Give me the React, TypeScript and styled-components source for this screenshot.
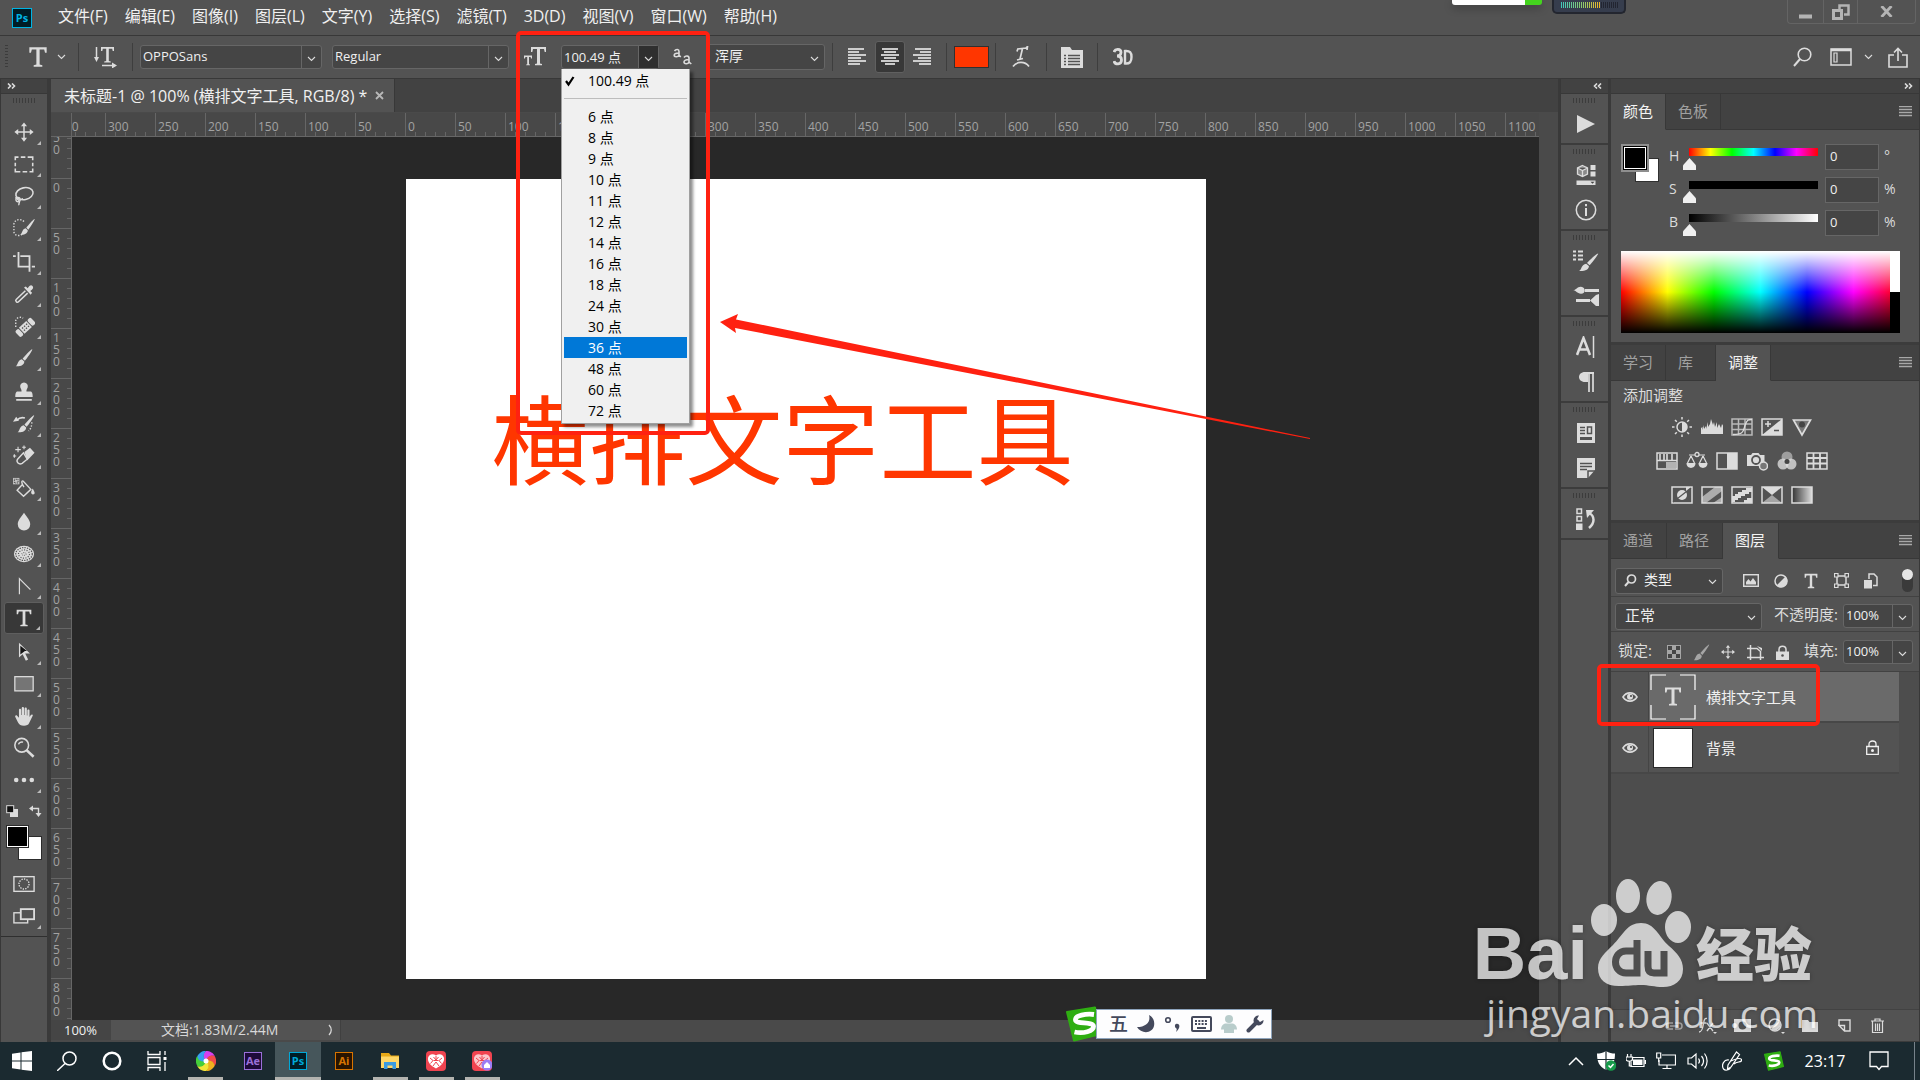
import React from 'react';
import styled, { createGlobalStyle, css } from 'styled-components';

const ui = `"Open Sans", "Noto Sans CJK SC", sans-serif`;

const c = {
  panel: '#535353',
  dark: '#424242',
  field: '#454545',
  line: '#383838',
  edge: '#666666',
  text: '#f0f0f0',
  dim: '#a0a0a0',
  icon: '#dcdcdc',
  red: '#ff2111',
  ink: '#ff3600',
};

const GlobalStyle = createGlobalStyle`
  * { box-sizing: border-box; }
  body { margin: 0; background: #282828; font-family: ${ui}; color: ${c.text}; overflow: hidden; }
  button, input, select { font-family: inherit; color: inherit; border: 0; padding: 0; margin: 0; background: none; outline: none; }
  svg { display: block; flex: none; }
`;

/* ---------- icons ---------- */

type IconProps = { w?: number; h?: number; box?: string; children: React.ReactNode };
const Icon = ({ w = 24, h = 24, box, children }: IconProps) => (
  <svg width={w} height={h} viewBox={box || `0 0 ${w} ${h}`} fill="none" stroke="currentColor" strokeWidth="1.5" aria-hidden="true">
    {children}
  </svg>
);
const F = { fill: 'currentColor', stroke: 'none' };

const Chevron = () => (
  <Icon w={9} h={6}><path d="M1 1l3.500 3.500L8 1" strokeWidth="1.100" /></Icon>
);
const TGlyph = <path d="M4 3h16v5h-1.500l-.8-3H13.500v14l2.500.6V21H8v-1.400l2.500-.6V5H6.300l-.8 3H4z" {...F} />;
const Brush = <g {...F}><path d="M21 2.500c1 .5-6.500 11-8 12.500l-2.500-2.300C12 11 19.500 2.500 21 2.500z" /><path d="M9.700 13.300l2.600 2.400c.3 3.500-4 5.800-9.300 5.300 2.500-1.500 2-7 6.700-7.700z" /></g>;
const MoveGlyph = <><path d="M12 4v16M4 12h16" strokeWidth="1.600" /><path d="M12 1.500l3.300 4.200H8.700zM12 22.500l3.300-4.200H8.700zM1.500 12l4.200-3.300v6.600zM22.500 12l-4.200-3.300v6.600z" {...F} /></>;

const tools: { name: string; art: React.ReactNode; plain?: boolean }[][] = [
  [
    { name: '移动工具', art: MoveGlyph },
    { name: '矩形选框工具', art: <path d="M2.500 8V4.500H6M8.500 4.500h5M16 4.500h5.500V8M21.500 10.500v4M21.500 17v3.500H18M15.500 20.500h-5M8 20.500H2.500V17M2.500 14.500v-4" strokeWidth="1.700" /> },
    { name: '套索工具', art: <><ellipse cx="12.500" cy="9.500" rx="9.500" ry="6.500" transform="rotate(-12 12.500 9.500)" strokeWidth="1.700" /><circle cx="5.500" cy="16" r="2.300" /><path d="M3 13c1 3 5 3.500 4 6-.5 1-1 1.500-.5 3M8 16l3-1" /></> },
    { name: '快速选择工具', art: <><path d="M12 5C8 1 1 3 1 8v8c0 4.500 7 5.500 9 2.500" strokeDasharray="1.500 1.700" /><g transform="translate(5.500 0) scale(.86 .92)">{Brush}</g></> },
  ],
  [
    { name: '裁剪工具', art: <path d="M6 1v16h11M0 5.500h3M8 5.500h10v17M20.500 17H24" strokeWidth="2" /> },
    { name: '吸管工具', art: <><path d="M13.500 8.500l-10 9.500c-1.500 1.500 1 4 2.500 2.500l10-9.500" strokeWidth="1.700" /><path d="M12 5l2-1.300 2 2c2-3 3.500-4 5.300-2.500 1.500 2 .5 3.500-2.500 5.500l2 2-1.500 2z" {...F} /></> },
    { name: '污点修复画笔工具', art: <><path d="M3 13V6c1-3.500 5.500-4.500 8-2.500" strokeDasharray="1.500 1.700" /><g transform="rotate(-43 13.500 13.500)"><rect x="2" y="9" width="5" height="9" rx="2" {...F} /><rect x="8" y="9" width="11" height="9" {...F} /><rect x="20" y="9" width="5" height="9" rx="2" {...F} /><path d="M10 12h1.500M13 12h1.500M16 12h1.500M10 15h1.500M13 15h1.500M16 15h1.500" stroke="#535353" /></g></> },
    { name: '画笔工具', art: Brush },
  ],
  [
    { name: '仿制图章工具', art: <path d="M12 1.500a4.200 4.200 0 014 5.500c-1 2-1.500 3-1.300 4.500h4.300c1.500 0 2.500 1.500 2.500 6h-19c0-4.500 1-6 2.500-6h4.300c.2-1.500-.3-2.500-1.300-4.500a4.200 4.200 0 014-5.500zM3.500 19.500h17V21.500h-17z" {...F} /> },
    { name: '历史记录画笔工具', art: <><g transform="translate(2 0)">{Brush}</g><path d="M4 8c3-3 6-3.500 9-2.500" strokeWidth="1.700" /><path d="M0 9.500L3.500 4l3 4.500z" {...F} /><path d="M20.500 10c0 4-1 7.500-3.500 9.500" strokeDasharray="1.500 1.800" /></> },
    { name: '魔术橡皮擦工具', art: <><path d="M12.500 7.500l6-4.500 5 5.500-8 8.500zM11.500 8.500l4 6" {...F} /><path d="M11.500 8.500L5 15.500c-2 3 1.500 6.500 5 4.500l5.500-4.500z" /><path d="M5.500 2v6M2.500 5h6M12 .5v4M10 2.500h4M1.500 10v4M-.5 12h4" strokeWidth="1.200" /></> },
    { name: '油漆桶工具', art: <><path d="M0 1h7v7H0z" {...F} opacity=".8" /><path d="M1.500 2.500h4v4h-4z" stroke="#333" strokeWidth="1" strokeDasharray="1 1" /><path d="M10.500 8L4.500 14.500l7 6.500 8-7.500-8.500-9C9 3.500 9 7 12 11" /><path d="M21.500 12.500c2.500 4 3 6.500.3 6.500s-2.500-3-.3-6.500z" {...F} /></> },
  ],
  [
    { name: '模糊工具', art: <path d="M12 2c3.500 5 6.800 8.500 6.800 12.500a6.800 6.800 0 01-13.600 0C5.200 10.500 8.500 7 12 2z" {...F} /> },
    { name: '海绵工具', art: <><ellipse cx="12" cy="12" rx="11" ry="9" {...F} /><ellipse cx="12" cy="12" rx="9" ry="7" stroke="#535353" strokeWidth="1.300" strokeDasharray="1.500 1.200" /><ellipse cx="12" cy="12" rx="6" ry="4.500" stroke="#535353" strokeWidth="1.300" strokeDasharray="1.200 1.500" /><ellipse cx="12" cy="12" rx="2.500" ry="1.500" stroke="#535353" strokeWidth="1" strokeDasharray="1 1" /></> },
    { name: '钢笔工具', art: <path d="M7 21V4l12 12" strokeWidth="1.300" /> },
    { name: '横排文字工具', art: TGlyph },
  ],
  [
    { name: '路径选择工具', art: <><path d="M6.500 2v16l4-3.500L14 21.500l2.500-1.300L13.300 13.500h5.200z" {...F} /><path d="M8 5.300v9.500l5-3.800h2.300z" fill="#151515" stroke="none" /></> },
    { name: '矩形工具', art: <rect x="2" y="4" width="20" height="15.500" fill="#757575" strokeWidth="1.400" /> },
    { name: '抓手工具', art: <path d="M6.500 14V5.500c0-1.700 2.300-1.700 2.400 0V11h.6V3.500c0-1.700 2.500-1.700 2.500 0V11h.6V4c0-1.700 2.500-1.700 2.500 0v7.500h.6V6c0-1.600 2.300-1.600 2.300 0v7l1.500-2c1-1.300 2.600-.4 2 .8l-4 8.200c-1 2-2.500 2.500-5.500 2.500-3.500 0-5-1-6.500-3.500l-3-6c-.7-1.500 1-2.500 2-1.300z" {...F} /> },
    { name: '缩放工具', art: <><circle cx="9.500" cy="9" r="7.500" strokeWidth="1.700" /><path d="M6 8c.5-2 3-3 5-2.300" /><path d="M14.500 14l8 7.500" strokeWidth="2.800" /></>, plain: true },
    { name: '更多工具', art: <g {...F}><circle cx="3.500" cy="12" r="2.500" /><circle cx="12" cy="12" r="2.500" /><circle cx="20.500" cy="12" r="2.500" /></g> },
  ],
];

/* ---------- shell ---------- */

const Shell = styled.div`
  position: relative; display: flex; flex-direction: column; width: 100%; height: 100vh;
  background: ${c.panel}; overflow: hidden;
`;

const MenuBar = styled.header`
  display: flex; align-items: center; height: 35px; padding-left: 12px; flex: none;
`;
const Menus = styled.nav`display: flex; gap: 17px; margin-left: 26px; padding-bottom: 3px; flex: 1;`;
const MenuItem = styled.button`font-size: 16px; line-height: 20px; white-space: nowrap;`;

const Logo = styled.span<{ $c: string; $bg: string; $s: number }>`
  display: grid; place-items: center; width: ${p => p.$s}px; height: ${p => p.$s}px;
  border: 1px solid ${p => p.$c}; background: ${p => p.$bg}; color: ${p => p.$c};
  font-size: 11px; line-height: 12px; font-weight: 700;
`;

const WindowButtons = styled.div`
  display: flex; align-self: flex-start; margin-right: 4px; height: 24px; border: 1px solid #646464; border-top: 0; border-radius: 0 0 4px 4px; color: #b4b4b4;
`;
const WinBtn = styled.button<{ $w: number }>`
  display: grid; place-items: center; width: ${p => p.$w}px; color: #b4b4b4;
  & + & { border-left: 1px solid #646464; }
`;

const OptionsBar = styled.div`
  display: flex; align-items: center; height: 43px; flex: none; border-top: 1px solid ${c.line}; padding-right: 12px; color: ${c.icon};
`;
const Grip = styled.i<{ $v?: boolean }>`
  display: block; flex: none;
  ${p => p.$v
    ? css`width: 3px; height: 24px; background: repeating-linear-gradient(#3c3c3c 0 1px, transparent 1px 3px);`
    : css`width: 23px; height: 5px; background: repeating-linear-gradient(90deg, #3c3c3c 0 1px, transparent 1px 3px);`}
`;
const Sep = styled.i`width: 1px; height: 28px; background: #3e3e3e; flex: none;`;
const Cell = styled.div<{ $w: number; $gap?: number }>`display: flex; align-items: center; justify-content: center; gap: ${p => p.$gap || 12}px; width: ${p => p.$w}px; flex: none;`;
const IconBtn = styled.button<{ $on?: boolean; $w?: number; $h?: number }>`
  display: grid; place-items: center; width: ${p => p.$w || 30}px; height: ${p => p.$h || 32}px; color: ${c.icon}; border-radius: 3px;
  ${p => p.$on && css`background: #383838; border: 1px solid #606060;`}
`;

const Field = styled.label<{ $w: number; $h?: number }>`
  display: flex; align-items: center; width: ${p => p.$w}px; height: ${p => p.$h || 24}px; flex: none;
  background: ${c.field}; border: 1px solid ${c.edge}; border-radius: 3px; color: ${c.icon};
`;
const FieldSelect = styled.select<{ $pad?: number; $size?: number }>`
  appearance: none; flex: 1; min-width: 0; height: 100%; padding: 0 0 2px ${p => p.$pad ?? 2}px;
  font-size: ${p => p.$size || 13}px; line-height: 20px; color: ${c.text};
  option { color: #000; }
`;
const FieldInput = styled.input`
  flex: 1; min-width: 0; width: 0; height: 100%; padding: 0 0 2px 2px; font-size: 13px; line-height: 20px; color: ${c.text};
`;
const Drop = styled.span<{ $div?: boolean; $dark?: boolean }>`
  display: grid; place-items: center; width: 20px; height: 100%; padding-top: 3px;
  ${p => p.$div && css`border-left: 1px solid ${c.edge};`}
  ${p => p.$dark && css`background: #2f2f2f;`}
`;
const SizeBox = styled.div`position: relative; flex: none;`;
const SizeMenu = styled.div`
  position: absolute; z-index: 5; top: 100%; left: 0; width: 129px; padding: 1px 2px 2px;
  background: #f0f0f0; border: 1px solid #a0a0a0; border-top: 0; box-shadow: 3px 3px 3px rgba(0, 0, 0, 0.45);
  display: flex; flex-direction: column;
`;
const SizeRow = styled.button<{ $hot?: boolean }>`
  display: grid; grid-template-columns: 24px 1fr; align-items: center; height: 21px; text-align: left;
  font-size: 14px; line-height: 21px; white-space: nowrap; color: ${p => (p.$hot ? '#fff' : '#000')}; background: ${p => (p.$hot ? '#0078d7' : 'none')};
`;
const SizeRule = styled.i`height: 1px; margin: 7px 0; background: #bdbdbd;`;
const Swatch = styled.button`width: 35px; height: 22px; background: ${c.ink}; border: 1px solid #303030;`;

/* ---------- work area ---------- */

const Main = styled.main`
  flex: 1; min-height: 0; display: grid; grid-template: minmax(0, 1fr) / 51px minmax(0, 1fr) 51px 309px; border-top: 1px solid ${c.line};
`;
const Strip = styled.div<{ $end?: boolean }>`
  display: flex; align-items: center; justify-content: ${p => (p.$end ? 'flex-end' : 'flex-start')};
  height: 15px; padding: 0 6px; background: ${c.dark}; border-bottom: 1px solid ${c.line}; flex: none; color: ${c.icon};
`;
const ToolColumn = styled.aside`display: flex; flex-direction: column; border-right: 4px solid #3a3a3a; border-left: 1px solid ${c.line}; min-height: 0;`;
const ToolList = styled.div`display: flex; flex-direction: column; align-items: center; gap: 2px; padding-top: 4px; border-bottom: 1px solid #2f2f2f; padding-bottom: 4px;`;
const GripHead = styled.div`height: 16px;`;
const ToolGroup = styled.div`display: flex; flex-direction: column;`;
const ToolButton = styled.button<{ $on?: boolean; $plain?: boolean }>`
  position: relative; display: grid; place-items: center; width: 40px; height: 32px; color: ${c.icon}; border-radius: 3px;
  ${p => p.$on && css`background: #383838; border: 1px solid #5e5e5e;`}
  ${p => !p.$plain && css`&::after { content: ''; position: absolute; right: 3px; bottom: 3px; border: 2px solid transparent; border-right-color: #bbb; border-bottom-color: #bbb; }`}
`;
const ColorPair = styled.div`position: relative; width: 36px; height: 35px; margin: 3px 0 6px; flex: none;`;
const Chip = styled.button<{ $bg: string; $front?: boolean; $s: number }>`
  position: absolute; ${p => (p.$front ? 'left:0; top:0; z-index:1;' : 'right:0; bottom:0;')}
  width: ${p => p.$s}px; height: ${p => p.$s}px; background: ${p => p.$bg}; border: 1px solid #2c2c2c;
  ${p => p.$front && css`box-shadow: inset 0 0 0 1px #fff;`}
`;
const Between = styled.div`display: flex; justify-content: space-between; width: 36px; height: 18px; margin: 4px 0 0; align-items: center; color: ${c.icon};`;

const Doc = styled.section`display: grid; grid-template-rows: 34px minmax(0, 1fr) 22px; min-width: 0; background: #4a4a4a; border-right: 2px solid #393939;`;
const TabBar = styled.div`display: flex; background: ${c.dark}; border-bottom: 1px solid #4a4a4a;`;
const DocTab = styled.div`
  display: flex; align-items: center; justify-content: space-between; gap: 8px; padding: 0 10px 0 13px; background: ${c.panel}; border-right: 1px solid ${c.line};
  font-size: 16px; line-height: 20px; white-space: nowrap;
`;
const Stage = styled.div`display: grid; grid-template: 24px minmax(0, 1fr) / 21px minmax(0, 1fr) 19px; min-height: 0;`;
const Corner = styled.div`background: #484848; border-bottom: 1px solid ${c.edge}; border-right: 1px solid ${c.edge};`;
const RulerX = styled.div`overflow: hidden; background: #484848; border-bottom: 1px solid ${c.edge};`;
const RulerXRow = styled.div`display: flex; height: 100%; margin-left: -17px;`;
const TickX = styled.span`
  flex: none; width: 50px; border-left: 1px solid ${c.edge}; padding: 5px 0 0 2px; font-size: 12px; line-height: 17px; color: #a2a2a2;
  background: repeating-linear-gradient(90deg, transparent 0 9px, ${c.edge} 9px 10px) 0 100% / 100% 4px no-repeat;
`;
const RulerY = styled.div`overflow: hidden; background: #484848; border-right: 1px solid ${c.edge};`;
const RulerYCol = styled.div`display: flex; flex-direction: column; margin-top: -9px;`;
const TickY = styled.span`
  flex: none; display: flex; flex-direction: column; height: 50px; border-top: 1px solid ${c.edge}; padding: 3px 0 0 2px; font-size: 12px; line-height: 12px; color: #a2a2a2;
  background: repeating-linear-gradient(transparent 0 9px, ${c.edge} 9px 10px) 100% 0 / 4px 100% no-repeat;
`;
const Viewport = styled.div`display: grid; place-items: center; grid-column: 2; background: #282828; overflow: hidden;`;
const Artboard = styled.div`
  width: 800px; height: 800px; background: #fff; padding: 200px 0 0 86px;
  font-family: "Noto Sans CJK SC", sans-serif; font-size: 97px; line-height: 112px; font-weight: 400; color: ${c.ink}; white-space: nowrap;
`;
const Status = styled.footer`display: flex; align-items: center; padding-bottom: 2px; font-size: 13px; line-height: 18px; color: ${c.text};`;
const ZoomInput = styled.input`width: 60px; height: 20px; padding-left: 13px; background: ${c.field}; font-size: 13px;`;
const DocInfo = styled.div`display: flex; align-items: center; justify-content: space-between; width: 230px; height: 20px; padding: 0 6px 0 50px; background: ${c.panel}; border-right: 1px solid #404040; font-size: 14px; color: #d8d8d8;`;

/* ---------- dock and panels ---------- */

const Dock = styled.aside`display: flex; flex-direction: column; border-left: 1px solid ${c.line}; border-right: 3px solid #3a3a3a;`;
const DockGroup = styled.div`display: flex; flex-direction: column; align-items: center; padding: 4px 0 2px; border-bottom: 2px solid #3c3c3c; ${Grip} { margin-bottom: 3px; }`;
const DockBtn = styled.button`display: grid; place-items: center; width: 44px; height: 35px; padding-left: 2px; color: ${c.icon};`;

const Panels = styled.aside`display: flex; flex-direction: column; min-height: 0; border-right: 1px solid ${c.line};`;
const Panel = styled.section<{ $grow?: boolean }>`
  display: flex; flex-direction: column; border-bottom: 3px solid #3c3c3c; ${p => p.$grow && css`flex: 1; min-height: 0; border-bottom-width: 1px;`}
`;
const Tabs = styled.div`display: flex; height: 36px; background: ${c.dark}; flex: none;`;
const Tab = styled.button<{ $on?: boolean; $w: number }>`
  min-width: ${p => p.$w}px; padding: 0 12px 2px; text-align: left; font-size: 15px; line-height: 20px; white-space: nowrap;
  color: ${p => (p.$on ? '#f4f4f4' : '#a0a0a0')}; background: ${p => (p.$on ? c.panel : 'none')};
  border-right: 1px solid ${c.line}; border-bottom: 1px solid ${p => (p.$on ? c.panel : c.line)};
`;
const TabRest = styled.div`display: flex; align-items: center; justify-content: flex-end; flex: 1; padding-right: 7px; border-bottom: 1px solid ${c.line}; color: #a8a8a8;`;
const ColorBody = styled.div`display: grid; grid-template-columns: 48px 1fr; padding: 14px 19px 9px 10px; row-gap: 15px;`;
const FgBg = styled.div`position: relative; width: 38px; height: 38px; &::before { content: ''; position: absolute; width: 28px; height: 28px; background: #8e8e8e; z-index: 1; }`;
const Fg = styled.button`position: absolute; left: 2px; top: 2px; z-index: 2; width: 24px; height: 24px; background: #000; border: 1px solid #000; box-shadow: inset 0 0 0 1px #fff;`;
const Bg = styled.button`position: absolute; right: 0; bottom: 0; width: 24px; height: 24px; background: #fff; border: 1px solid #303030;`;
const Sliders = styled.div`display: flex; flex-direction: column; gap: 7px;`;
const SliderRow = styled.div`display: grid; grid-template-columns: 13px 141px 54px 1fr; column-gap: 1px; height: 26px; font-size: 14px; line-height: 24px; color: ${c.icon};`;
const Slider = styled.input<{ $g: string }>`
  appearance: none; width: 141px; height: 22px; margin-top: 4px;
  background: linear-gradient(90deg, ${p => p.$g}) 6px 0 / 129px 8px no-repeat;
  &::-webkit-slider-runnable-track { height: 22px; }
  &::-webkit-slider-thumb { appearance: none; width: 13px; height: 12px; margin-top: 10px; background: #f0f0f0; clip-path: polygon(50% 0, 100% 60%, 100% 100%, 0 100%, 0 60%); }
`;
const NumInput = styled.input`width: 54px; height: 26px; padding: 0 0 2px 4px; background: ${c.field}; border: 1px solid ${c.edge}; font-size: 13px; color: ${c.text};`;
const Unit = styled.span`padding-left: 4px;`;
const Spectrum = styled.div`
  grid-column: 1 / 3; display: grid; grid-template-columns: 1fr 10px; height: 82px;
  background: linear-gradient(#fff, rgba(255,255,255,0) 50%, rgba(0,0,0,0) 50%, #000), linear-gradient(90deg, #f00, #ff0, #0f0, #0ff, #00f, #f0f, #f00);
  &::after { content: ''; grid-column: 2; background: linear-gradient(#fff 50%, #000 50%); }
`;
const AdjBody = styled.div`padding: 4px 12px 8px; font-size: 15px; line-height: 20px; color: #dcdcdc;`;
const AdjRow = styled.div<{ $in?: boolean }>`display: flex; height: 34px; padding-left: ${p => (p.$in ? 44 : 29)}px; &:first-of-type { margin-top: 5px; }`;

const Row = styled.div<{ $h: number; $top?: number }>`
  display: flex; align-items: center; height: ${p => p.$h}px; padding: ${p => p.$top || 0}px 6px 0 4px; border-bottom: 1px solid #424242; flex: none; color: ${c.icon};
`;
const Caption = styled.span`font-size: 15px; line-height: 20px; white-space: nowrap; color: ${c.icon}; padding-bottom: 5px;`;
const Push = styled.span`flex: 1;`;
const Toggle = styled.button`width: 11px; height: 23px; margin-left: 8px; border-radius: 6px; background: #3a3a3a; display: flex; &::after { content: ''; width: 11px; height: 11px; border-radius: 50%; background: #e6e6e6; }`;
const LayerList = styled.div`flex: 1; min-height: 0; background: #4d4d4d; padding-right: 20px;`;
const Layer = styled.div<{ $on?: boolean }>`
  display: grid; grid-template-columns: 37px 58px 1fr 33px; align-items: center; height: 51px; border-bottom: 2px solid #474747; background: ${p => (p.$on ? '#6a6a6a' : c.panel)};
  font-size: 15px; line-height: 20px; color: ${c.text};
`;
const Eye = styled.button`display: grid; place-items: center; width: 38px; height: 49px; background: ${c.panel}; border-right: 1px solid #454545; color: ${c.icon};`;
const Thumb = styled.span`display: block; width: 40px; height: 40px; margin-left: 5px; background: #fff; border: 1px solid #282828;`;
const TextThumb = styled.span`margin-left: 2px; color: ${c.icon};`;
const PanelFoot = styled.div`display: flex; align-items: center; justify-content: flex-end; gap: 10px; height: 32px; padding-right: 31px; border-top: 1px solid #424242; color: #d2d2d2; flex: none;`;

/* ---------- taskbar ---------- */

const Taskbar = styled.footer`display: flex; height: 38px; flex: none; background: #1b2a30; color: #fff; padding-right: 5px;`;
const Task = styled.button<{ $w?: number; $run?: boolean; $on?: boolean }>`
  position: relative; display: grid; place-items: center; width: ${p => p.$w || 46}px; height: 38px; color: #fff;
  ${p => p.$run && css`background: linear-gradient(#b4b4b0, #b4b4b0) 50% 100% / 35px 3px no-repeat;`}
  ${p => p.$on && css`background: linear-gradient(#b4b4b0, #b4b4b0) 50% 100% / 100% 3px no-repeat, #46565b;`}
`;
const Tray = styled.div`display: flex; align-items: center; margin-left: auto; padding-right: 13px; border-right: 1px solid #77828a;`;
const Clock = styled.time`width: 72px; padding-right: 16px; text-align: center; font-size: 16px; line-height: 20px;`;

/* ---------- overlays ---------- */

const Annotations = styled.svg`position: absolute; left: 0; top: 0; z-index: 8; pointer-events: none;`;
const Ime = styled.div`
  position: absolute; z-index: 9; left: 1066px; bottom: 40px; display: flex; align-items: center; height: 32px; color: #44495c;
`;
const ImeBar = styled.div`display: flex; align-items: center; justify-content: space-between; width: 176px; height: 30px; margin-left: -6px; padding: 0 7px 0 12px; background: #fdfdfe; border: 1px solid #8ea4bc; font-size: 19px; line-height: 24px; font-weight: 500;`;
const TopWidget = styled.div`
  position: absolute; z-index: 9; right: 294px; top: 0; display: flex; align-items: flex-start; gap: 10px;
`;
const WhiteStub = styled.i`width: 90px; height: 5px; background: linear-gradient(90deg, #fff 73px, #44d41e 73px); border-radius: 0 0 3px 3px; box-shadow: 0 3px 8px rgba(0,0,0,.3);`;
const Meter = styled.i`
  width: 74px; height: 14px; border: 2px solid #23262f; border-top: 0; border-radius: 0 0 5px 5px; background: #363d4d;
  &::before { content: ''; display: block; width: 58px; height: 6px; margin: 2px 0 0 7px; background: repeating-linear-gradient(90deg, transparent 0 1px, #363d4d 1px 2px), linear-gradient(90deg, #3fc9bd, #8fca6a 22px, #f0b428 39px, #222531 39px); }
`;
const Watermark = styled.div`position: absolute; z-index: 9; right: 102px; bottom: 43px; color: #fff; opacity: 0.72; pointer-events: none; text-shadow: 0 0 4px rgba(0,0,0,.35);`;
const MarkTop = styled.div`display: flex; align-items: flex-end; justify-content: flex-end; height: 112px; margin-right: 6px;`;
const MarkLatin = styled.span`font: 700 74px/70px "Liberation Sans", Arial, sans-serif; margin-right: 3px;`;
const MarkCjk = styled.span`font: 900 58px/76px "Noto Sans CJK SC", sans-serif; margin-left: 5px;`;
const MarkUrl = styled.div`font-size: 39px; line-height: 48px; font-weight: 500; text-align: right;`;

const lines = (a: number[][]) => a.map(([x1, x2, y]) => <path key={y} d={`M${x1} ${y + 1}H${x2}`} strokeWidth="1.800" />);
const sizes = [6, 8, 9, 10, 11, 12, 14, 16, 18, 24, 30, 36, 48, 60, 72];
const xs = Array.from({ length: 30 }, (_, i) => Math.abs(i * 50 - 350));
const ys = Array.from({ length: 18 }, (_, i) => Math.abs(i * 50 - 50));

const DblArrow = ({ back }: { back?: boolean }) => (
  <Icon w={9} h={6}><path d={back ? 'M4 .5L1.500 3 4 5.500M8 .5L5.500 3 8 5.500' : 'M1 .5L3.500 3 1 5.500M5 .5L7.500 3 5 5.500'} strokeWidth="1.600" /></Icon>
);
const Burger = () => <Icon w={13} h={11}><path d="M0 .5h13M0 3.500h13M0 6.500h13M0 9.500h13" strokeWidth="1.300" /></Icon>;
const PanelTabs = ({ items, on, w = 50 }: { items: string[]; on: number; w?: number }) => (
  <Tabs>
    {items.map((t, i) => <Tab key={t} $w={w} $on={i === on}>{t}</Tab>)}
    <TabRest><Burger /></TabRest>
  </Tabs>
);
const A = ({ children }: { children: React.ReactNode }) => (
  <IconBtn $w={30} $h={34}><Icon w={22} h={20}>{children}</Icon></IconBtn>
);
const frame = <rect x="1" y="2" width="20" height="16" />;
const EyeIcon = () => (
  <Icon w={16} h={12}><path d="M1 6c3.500-5.500 10.500-5.500 14 0-3.500 5.500-10.500 5.500-14 0z" strokeWidth="1.600" /><circle cx="8" cy="5.800" r="3" {...F} /><circle cx="9" cy="5" r="1" fill="#444" stroke="none" /></Icon>
);
const SogouS = ({ s }: { s: number }) => (
  <Icon w={s} h={s} box="0 0 36 36">
    <path d="M1 6L29 1.500 35 28 8 34.500z" fill="#2fae12" stroke="#2fae12" strokeWidth="2" strokeLinejoin="round" />
    <path d="M28 8.500C20 7.500 9 9.500 9.500 14c.5 4.500 18 1 18 6.500 0 4.500-10 7.500-19 5.500" stroke="#fff" strokeWidth="4.800" />
  </Icon>
);
const Heart = ({ house }: { house?: boolean }) => (
  <Icon w={20} h={20}>
    <rect width="20" height="20" rx="4" fill="#f04450" stroke="none" />
    <path d="M10 17.500C4.500 14.500 1.500 11 2 7c.7-4 5-5 8-2.500C13 2 17.300 3 18 7c.5 4-2.500 7.500-8 10.500z" fill="#fff" opacity={house ? 0.7 : 1} stroke="none" />
    <path d="M4 7l3 2.500-2.500 3M10 5v3M7.500 6l2.500 3 2.500-3M16 7l-3 2.500 2.500 3M7 15l3-4 3 4M7.500 9.500h5" stroke="#f04450" strokeWidth="1" />
    {house && <><circle cx="15" cy="14" r="5.500" fill="#9b7cf5" stroke="none" /><path d="M12 14l3-3 3 3v3h-6z" fill="#fff" stroke="none" /></>}
  </Icon>
);

export default function App() {
  return (
    <Shell>
      <GlobalStyle />
      <MenuBar>
        <Logo $c="#00b4e4" $bg="#001d26" $s={20}>Ps</Logo>
        <Menus>
          {['文件(F)', '编辑(E)', '图像(I)', '图层(L)', '文字(Y)', '选择(S)', '滤镜(T)', '3D(D)', '视图(V)', '窗口(W)', '帮助(H)'].map(m => <MenuItem key={m}>{m}</MenuItem>)}
        </Menus>
        <WindowButtons>
          <WinBtn $w={35} aria-label="最小化"><Icon w={13} h={14}><path d="M0 11.500h13" strokeWidth="4" /></Icon></WinBtn>
          <WinBtn $w={34} aria-label="还原"><Icon w={18} h={16}><path d="M7.500 6V1.500h9v9H12" strokeWidth="2.500" /><path d="M1.500 6.500h8v8h-8z" strokeWidth="3" /></Icon></WinBtn>
          <WinBtn $w={58} aria-label="关闭"><Icon w={13} h={11}><path d="M1.500 0l10 11M11.500 0l-10 11" strokeWidth="2.800" /></Icon></WinBtn>
        </WindowButtons>
      </MenuBar>

      <OptionsBar>
        <Cell $w={12}><Grip $v /></Cell>
        <Cell $w={66} $gap={6}><Icon w={26} h={26} box="0 0 24 24">{TGlyph}</Icon><Chevron /></Cell>
        <Sep />
        <Cell $w={53}>
          <Icon w={23} h={22}><path d="M2.500 1v12M8 19.500h13" strokeWidth="1.500" /><path d="M0 11l2.500 5L5 11zM18 16.500l5 3-5 3z" {...F} /><path d="M7 1h13v4h-1.300l-.5-2.200h-3.400V15l2 .5v1h-6.600v-1l2-.5V2.800H8.800L8.300 5H7z" {...F} /></Icon>
        </Cell>
        <Sep />
        <Cell $w={7} />
        <Field $w={182}><FieldSelect aria-label="字体"><option>OPPOSans</option></FieldSelect><Drop $div><Chevron /></Drop></Field>
        <Cell $w={10} />
        <Field $w={177}><FieldSelect aria-label="字体样式"><option>Regular</option></FieldSelect><Drop $div><Chevron /></Drop></Field>
        <Cell $w={52}>
          <Icon w={22} h={20}><path d="M7 0h15v5h-1.300l-.7-3h-4v14.500l2 .5v1.200h-7V17l2-.5V2H9l-.7 3H7zM0 8.500h8v3H7l-.4-1.500H5v7.200l1 .2v.8H2.200v-.8l1-.2V10H1.400L1 11.500H0z" {...F} /></Icon>
        </Cell>
        <SizeBox>
          <Field $w={98}><FieldInput aria-label="字体大小" defaultValue="100.49 点" /><Drop $div $dark><Chevron /></Drop></Field>
          <SizeMenu>
            <SizeRow><Icon w={12} h={12}><path d="M2 6l2.500 3.500L9.500 2" stroke="#000" strokeWidth="2.200" /></Icon>100.49 点</SizeRow>
            <SizeRule />
            {sizes.map(s => <SizeRow key={s} $hot={s === 36}><span /><span>{`${s} 点`}</span></SizeRow>)}
          </SizeMenu>
        </SizeBox>
        <Cell $w={47}>
          <Icon w={19} h={18}>
            <path d="M1.500 3C3 .8 6 1 6 3.500V9M6 5C3 5 1.200 5.500 1.200 7.300S5 9.500 6 7.200L7.800 9" strokeWidth="1.600" />
            <path d="M11 9.500c1.500-2.200 5-2 5 .6V15M16 11.500c-3 .2-5 .5-5 2.500s4 2.500 5 0l2.300 2" strokeWidth="1.600" />
          </Icon>
        </Cell>
        <Field $w={119} $h={26}><FieldSelect $pad={8} $size={14} aria-label="消除锯齿"><option>浑厚</option></FieldSelect><Drop><Chevron /></Drop></Field>
        <Cell $w={7} /><Sep />
        <Cell $w={9} />
        <IconBtn aria-label="左对齐"><Icon w={18} h={18}>{lines([[0, 16, 0], [0, 11, 3], [0, 18, 6], [0, 13, 9], [0, 18, 12], [0, 12, 15]])}</Icon></IconBtn>
        <Cell $w={3} />
        <IconBtn $on aria-label="居中"><Icon w={18} h={18}>{lines([[1, 17, 0], [3, 15, 3], [0, 18, 6], [3, 15, 9], [0, 18, 12], [4, 14, 15]])}</Icon></IconBtn>
        <Cell $w={2} />
        <IconBtn aria-label="右对齐"><Icon w={18} h={18}>{lines([[2, 18, 0], [7, 18, 3], [0, 18, 6], [5, 18, 9], [0, 18, 12], [6, 18, 15]])}</Icon></IconBtn>
        <Cell $w={9} /><Sep /><Cell $w={7} />
        <Swatch aria-label="文本颜色" />
        <Cell $w={6} /><Sep />
        <Cell $w={50}><Icon w={18} h={22}><path d="M5 5.500L5.800 3 14 2l1.500-1.500L15 4M10.500 2.500L8 13M5 14l6-1.500M1 20.500c4-5.500 12-5.500 16 0" strokeWidth="1.700" /></Icon></Cell>
        <Sep />
        <Cell $w={50}><Icon w={22} h={22}><path d="M0 1h9l2 3h11v18H0z" {...F} /><path d="M3 9.500h2M7 9.500h12M3 12.500h2M7 12.500h12M3 15.500h2M7 15.500h12M3 18.500h2M7 18.500h12" stroke="#535353" strokeWidth="1.300" /></Icon></Cell>
        <Sep />
        <Cell $w={50}>
          <Icon w={20} h={18}><path d="M1 4c1-3.500 7-3.500 7 .5 0 3-3 3.500-4 3.500 2 0 4.500 1 4.500 4 0 5-6.500 5-7.500 1" strokeWidth="2.800" /><path d="M12 3v12.500c5 .5 6.500-2 6.500-6.500S17 2.500 12 3z" strokeWidth="2.400" /></Icon>
        </Cell>
        <Push />
        <Cell $w={24}><Icon w={19} h={20}><circle cx="11.500" cy="7.500" r="6.300" strokeWidth="1.600" /><path d="M7 12l-6 7" strokeWidth="2" /></Icon></Cell>
        <Cell $w={74}><Icon w={22} h={18}><path d="M1 1h20v16H1z" /><path d="M1 2h20" strokeWidth="2.500" /><path d="M4 5h3v9H4z" strokeWidth="1.200" /></Icon><Chevron /></Cell>
        <Icon w={20} h={21}><path d="M6 8H1v12h18V8h-5M10 14V2M6 5.500L10 1.500l4 4" strokeWidth="1.600" /></Icon>
      </OptionsBar>

      <Main>
        <ToolColumn>
          <Strip><DblArrow /></Strip>
          <ToolList>
            <GripHead><Grip /></GripHead>
            {tools.map((g, i) => (
              <ToolGroup key={i}>
                {g.map(t => (
                  <ToolButton key={t.name} aria-label={t.name} $on={t.name === '横排文字工具'} $plain={t.plain}>
                    <Icon w={22} h={22} box="0 0 24 24">{t.art}</Icon>
                  </ToolButton>
                ))}
              </ToolGroup>
            ))}
            <Between>
              <Icon w={12} h={12}><rect x="4" y="4" width="8" height="8" {...F} /><rect x=".7" y=".7" width="7" height="7" fill="#111" strokeWidth="1" /></Icon>
              <Icon w={13} h={12}><path d="M3 3.500h6.500V9" strokeWidth="1.400" /><path d="M0 3.500L4 .5v6zM9.500 12l-3-4h6z" {...F} /></Icon>
            </Between>
            <ColorPair><Chip $front $bg="#000" $s={23} aria-label="前景色" /><Chip $bg="#fff" $s={24} aria-label="背景色" /></ColorPair>
            <ToolGroup>
              <ToolButton $plain aria-label="快速蒙版"><Icon w={22} h={22} box="0 0 24 24"><rect x="1" y="4" width="22" height="16" /><circle cx="12" cy="12" r="5.500" strokeDasharray="1.500 1.300" /></Icon></ToolButton>
              <ToolButton aria-label="屏幕模式"><Icon w={22} h={22} box="0 0 24 24"><rect x="1" y="8.500" width="15" height="11" /><rect x="8.500" y="4.500" width="14.500" height="11" fill="#535353" strokeWidth="2" /></Icon></ToolButton>
            </ToolGroup>
          </ToolList>
        </ToolColumn>

        <Doc>
          <TabBar>
            <DocTab>
              <span>未标题-1 @ 100% (横排文字工具, RGB/8) *</span>
              <Icon w={9} h={9}><path d="M1 1l7 7M8 1L1 8" strokeWidth="1.800" stroke="#b8b8b8" /></Icon>
            </DocTab>
          </TabBar>
          <Stage>
            <Corner />
            <RulerX><RulerXRow>{xs.map((n, i) => <TickX key={i}>{n}</TickX>)}</RulerXRow></RulerX>
            <span />
            <RulerY><RulerYCol>{ys.map((n, i) => <TickY key={i}>{String(n).split('').map((d, j) => <span key={j}>{d}</span>)}</TickY>)}</RulerYCol></RulerY>
            <Viewport><Artboard>横排文字工具</Artboard></Viewport>
          </Stage>
          <Status>
            <ZoomInput aria-label="缩放" defaultValue="100%" />
            <DocInfo>文档:1.83M/2.44M<Icon w={6} h={12}><path d="M1 1c3 3 3 7 0 10" strokeWidth="1.300" /></Icon></DocInfo>
          </Status>
        </Doc>

        <Dock>
          <Strip $end><DblArrow back /></Strip>
          <DockGroup><Grip /><DockBtn><Icon w={18} h={18}><path d="M0 0l18 9-18 9z" {...F} /></Icon></DockBtn></DockGroup>
          <DockGroup><Grip />
            <DockBtn><Icon w={20} h={22}><path d="M6.500 1.500l5 2.500v6l-5 2.500-5-2.500V4zM1.500 4l5 2.500 5-2.500M6.500 6.500v6" fill="#8a8a8a" strokeWidth="1.300" /><path d="M14.500 1h5v5h-5zM14.500 7.500h5v5h-5zM.5 16.500h19V21H.5z" {...F} /><path d="M14.500 17.800h4l-2 2z" fill="#444" stroke="none" /></Icon></DockBtn>
            <DockBtn><Icon w={22} h={22}><circle cx="11" cy="11" r="9.700" /><path d="M11 9v8M11 5v2.300" strokeWidth="2" /></Icon></DockBtn>
          </DockGroup>
          <DockGroup><Grip />
            <DockBtn><Icon w={26} h={22}><path d="M0 1.500h3M5 1.500h5M0 5.500h3M5 5.500h5M0 9.500h3M5 9.500h5" strokeWidth="2" /><g transform="translate(3 1) scale(1.050 .95)">{Brush}</g></Icon></DockBtn>
            <DockBtn><Icon w={26} h={20}><path d="M12 4.500h14M3 14.500h14" strokeWidth="2.800" /><path d="M0 4c3 .5 4-3.500 8-3.300 5 .5 5 7 0 7C4 7.500 3 4.500 0 4zM26 8v13l-3-1-6-5.500 6-5.500z" {...F} /></Icon></DockBtn>
          </DockGroup>
          <DockGroup><Grip />
            <DockBtn><Icon w={20} h={22}><path d="M1 19L7.500 2 14 19M3.500 13.500h8" strokeWidth="2.500" /><path d="M17.500 0v22" strokeWidth="1.500" /></Icon></DockBtn>
            <DockBtn><Icon w={18} h={22}><path d="M12 3v18M16 2v19" strokeWidth="1.700" /><path d="M17 1H8C0 1 0 11 8 11h3V3h6z" {...F} /></Icon></DockBtn>
          </DockGroup>
          <DockGroup><Grip />
            <DockBtn><Icon w={18} h={20}><path d="M0 0h18v20H0z" {...F} /><path d="M3 4.500h5M3 7.500h5M3 10.500h5" stroke="#535353" strokeWidth="1.400" /><path d="M3 15.500h12" stroke="#535353" strokeWidth="3" /><path d="M10.500 4h4v6.500h-4z" stroke="#535353" strokeWidth="1.500" /></Icon></DockBtn>
            <DockBtn><Icon w={18} h={20}><path d="M0 0h18v12l-7 8H0z" {...F} /><path d="M3 5.500h12M3 8.500h12M3 11.500h7M11 20v-7h7" stroke="#535353" strokeWidth="1.500" /></Icon></DockBtn>
          </DockGroup>
          <DockGroup><Grip />
            <DockBtn><Icon w={20} h={22}><path d="M1 1h4.500v4.500H1zM1 8.500h4.500V13H1z" /><path d="M0 15.500h6.500V22H0z" {...F} /><path d="M13 5c6 3 6 10 0 15" strokeWidth="2.500" /><path d="M10 2h8l-7 8z" {...F} /></Icon></DockBtn>
          </DockGroup>
        </Dock>

        <Panels>
          <Strip $end><DblArrow /></Strip>
          <Panel>
            <PanelTabs items={['颜色', '色板']} on={0} />
            <ColorBody>
              <FgBg><Fg aria-label="前景色" /><Bg aria-label="背景色" /></FgBg>
              <Sliders>
                {[['H', '#f00,#ff0,#0f0,#0ff,#00f,#f0f,#f00', '°'], ['S', '#000,#000', '%'], ['B', '#000,#fff', '%']].map(([n, g, u]) => (
                  <SliderRow key={n}>
                    <label htmlFor={`s${n}`}>{n}</label>
                    <Slider id={`s${n}`} type="range" min={0} max={100} defaultValue={0} $g={g} />
                    <NumInput aria-label={n} defaultValue="0" />
                    <Unit>{u}</Unit>
                  </SliderRow>
                ))}
              </Sliders>
              <Spectrum />
            </ColorBody>
          </Panel>

          <Panel>
            <PanelTabs items={['学习', '库', '调整']} on={2} />
            <AdjBody>
              <span>添加调整</span>
              <AdjRow $in>
                <A><circle cx="11" cy="10" r="5" /><path d="M11 5a5 5 0 010 10z" {...F} /><path d="M11 0v2.500M11 17.500V20M1 10h2.500M18.500 10H21M4 3l1.800 1.800M16.200 15.200L18 17M18 3l-1.800 1.800M5.800 15.200L4 17" /></A>
                <A><path d="M0 17V11l1.500-1v3L3 8v4l2-3v3l2-7v5l2-3 1-5 2 6 1-3 1 5 2-5v6l2-4 2 4 1-4 2 3v7z" {...F} /></A>
                <A><g opacity=".75">{frame}<path d="M1 7h20M1 12.500h20M7.500 2v16M14 2v16" /></g><path d="M2 17.500c11 0 10-3 12-9s3-6 7-6" strokeWidth="1.300" /></A>
                <A>{frame}<path d="M1 18L21 2v16z" {...F} /><path d="M4 7h6M7 4v6" /><path d="M13 13.500h5" stroke="#535353" /></A>
                <A><path d="M2.500 3h17L11 18z" strokeWidth="1.700" fill="#777" /><circle cx="11" cy="7.500" r="3" fill="#444" stroke="none" /></A>
              </AdjRow>
              <AdjRow>
                <A>{frame}<path d="M1 9.500h20M4 3v6M8 3v6M11 3v6M16 3v6" strokeWidth="1.600" /><path d="M10 11h10v6H10z" {...F} opacity=".7" /></A>
                <A><path d="M3 4h6M13 4h6M5 5L1.500 12M5 5l3.500 7M17 5l-3.500 7M17 5l3.500 7" strokeWidth="1.200" /><circle cx="11" cy="3.500" r="2" strokeWidth="1.300" /><path d="M.5 12h9c0 6.500-9 6.500-9 0zM12.500 12h9c0 6.500-9 6.500-9 0z" {...F} /></A>
                <A>{frame}<path d="M11 2h10v16H11z" {...F} /></A>
                <A><path d="M1 4h4l1.500-2h6L14 4h4.500v11H1z" {...F} /><circle cx="10" cy="9" r="4" stroke="#535353" strokeWidth="1.800" /><circle cx="17.500" cy="15" r="4" fill="#777" /></A>
                <A><circle cx="11" cy="6" r="5.500" {...F} opacity=".55" /><circle cx="7" cy="13" r="5.500" {...F} opacity=".8" /><circle cx="15" cy="13" r="5.500" {...F} opacity=".8" /><circle cx="11" cy="10.500" r="2.500" fill="#444" stroke="none" /></A>
                <A>{frame}<path d="M1 7h20M1 12.500h20M7.500 2v16M14 2v16" strokeWidth="1.800" /></A>
              </AdjRow>
              <AdjRow $in>
                <A>{frame}<circle cx="11" cy="10" r="5" {...F} /><path d="M2 17L20 3" stroke="#535353" strokeWidth="1.200" /><path d="M15 2h5l-5 4z" {...F} /></A>
                <A>{frame}<path d="M1 12L14 2h7v4L5 18H1zM12 18l9-6v6z" {...F} opacity=".65" /></A>
                <A>{frame}<path d="M1 11h3V9h3V7h4V5h4V3h6v4h-3v2h-4v2h-4v2H7v2H4v2H1zM13 18v-3h3v-2h5v5z" {...F} /></A>
                <A>{frame}<path d="M1 2l10 8L21 2z" {...F} /><path d="M1 18l10-8 10 8z" {...F} opacity=".6" /></A>
                <A><defs><linearGradient id="gm"><stop stopColor="#333" /><stop offset="1" stopColor="#ddd" /></linearGradient></defs><rect x="1" y="2" width="20" height="16" fill="url(#gm)" /></A>
              </AdjRow>
            </AdjBody>
          </Panel>

          <Panel $grow>
            <PanelTabs items={['通道', '路径', '图层']} on={2} w={56} />
            <Row $h={38} $top={6}>
              <Field $w={108} $h={26}>
                <Cell $w={28}><Icon w={13} h={13}><circle cx="7.500" cy="5" r="4" strokeWidth="1.700" /><path d="M4.500 8L1 12" strokeWidth="2" /></Icon></Cell>
                <FieldSelect $pad={0} $size={14} aria-label="类型"><option>类型</option></FieldSelect><Drop><Chevron /></Drop>
              </Field>
              <Cell $w={13} />
              <IconBtn><Icon w={16} h={13}><rect x=".7" y=".7" width="14.600" height="11.600" /><path d="M3 10.500V8l2.500-3 2 2.500L10 4l3 4v2.500z" {...F} /></Icon></IconBtn>
              <IconBtn><Icon w={14} h={14}><circle cx="7" cy="7" r="6" /><path d="M11.500 2.500A6.200 6.200 0 012.500 11.500z" {...F} /></Icon></IconBtn>
              <IconBtn><Icon w={16} h={16} box="3 2 18 20">{TGlyph}</Icon></IconBtn>
              <IconBtn><Icon w={15} h={15}><path d="M3 3h9v9H3z" /><path d="M.5 .5h3.500v3.500H.5zM11 .5h3.500v3.500H11zM.5 11h3.500v3.500H.5zM11 11h3.500v3.500H11z" fill="#535353" strokeWidth="1.200" /></Icon></IconBtn>
              <IconBtn><Icon w={14} h={16}><path d="M5 6V1h5l3 3v8.500H9" /><path d="M0 7h8v8.500H0z" {...F} /></Icon></IconBtn>
              <Push />
              <Toggle aria-label="滤镜开关" />
            </Row>
            <Row $h={35} $top={4}>
              <Field $w={147} $h={27}><FieldSelect $pad={9} $size={15} aria-label="混合模式"><option>正常</option></FieldSelect><Drop><Chevron /></Drop></Field>
              <Push />
              <Caption>不透明度:</Caption><Cell $w={5} />
              <Field $w={70}><FieldInput aria-label="不透明度" defaultValue="100%" /><Drop $div><Chevron /></Drop></Field>
            </Row>
            <Row $h={40} $top={1}>
              <Cell $w={3} /><Caption>锁定:</Caption><Cell $w={9} />
              <IconBtn $w={27}><Icon w={14} h={14}><g opacity=".6"><path d="M0 0h14v14H0z" {...F} /><path d="M1 1h4v4H1zM9 1h4v4H9zM5 5h4v4H5zM1 9h4v4H1zM9 9h4v4H9z" fill="#3c3c3c" stroke="none" /></g></Icon></IconBtn>
              <IconBtn $w={27}><Icon w={17} h={17} box="2 2 20 20"><g opacity=".6">{Brush}</g></Icon></IconBtn>
              <IconBtn $w={27}><Icon w={16} h={16} box="0 0 24 24">{MoveGlyph}</Icon></IconBtn>
              <IconBtn $w={27}><Icon w={17} h={15}><path d="M3.500 0v12M0 3.500h10l3.500 3V12M0 12.500h17M13.500 10v5M3.500 12v3" /><path d="M10 1l5 5V3z" {...F} /></Icon></IconBtn>
              <IconBtn $w={27}><Icon w={13} h={15}><path d="M3 7V4.500c0-4.500 7-4.500 7 0V7" /><path d="M0 6.500h13V15H0z" {...F} /><circle cx="6.500" cy="10.500" r="1.300" fill="#535353" stroke="none" /></Icon></IconBtn>
              <Push />
              <Caption>填充:</Caption><Cell $w={5} />
              <Field $w={70}><FieldInput aria-label="填充" defaultValue="100%" /><Drop $div><Chevron /></Drop></Field>
            </Row>
            <LayerList>
              <Layer $on>
                <Eye aria-label="显示"><EyeIcon /></Eye>
                <TextThumb><Icon w={46} h={46}><path d="M1 16V1h15M30 1h15v15M45 31v14H30M16 45H1V31" stroke="#fff" strokeWidth="1.200" /><g transform="translate(11 10.500)">{TGlyph}</g></Icon></TextThumb>
                <span>横排文字工具</span>
              </Layer>
              <Layer>
                <Eye aria-label="显示"><EyeIcon /></Eye>
                <Thumb />
                <span>背景</span>
                <Icon w={13} h={15}><path d="M3 6V4c0-4 7-4 7 0v2M.7 6.500h11.600v7.800H.7z" strokeWidth="1.300" /><circle cx="6.500" cy="10.500" r="1.500" {...F} /></Icon>
              </Layer>
            </LayerList>
            <PanelFoot>
              <IconBtn $w={24}><Icon w={18} h={10}><path d="M8 2H4c-4 0-4 6 0 6h4M10 2h4c4 0 4 6 0 6h-4M5 5h8" opacity=".6" /></Icon></IconBtn>
              <IconBtn $w={24}><Icon w={20} h={18}><path d="M9 1.500C6 1 6 4 5.500 7S4 15 1 15M2.500 6h6M9 6l6 8M15 6l-6 8" strokeWidth="1.300" /><path d="M15 15h4l-2 2z" {...F} /></Icon></IconBtn>
              <IconBtn $w={24}><Icon w={17} h={13}><path d="M0 0h17v13H0z" {...F} /><circle cx="8.500" cy="6.500" r="4" fill="#535353" stroke="none" /></Icon></IconBtn>
              <IconBtn $w={24}><Icon w={18} h={18}><circle cx="8" cy="8" r="6" /><path d="M12.500 3.500A6.500 6.500 0 013.500 12.500z" {...F} /><path d="M14 15h4l-2 2z" {...F} /></Icon></IconBtn>
              <IconBtn $w={24}><Icon w={16} h={13}><path d="M0 1h6l1.500 2H16v10H0z" {...F} /></Icon></IconBtn>
              <IconBtn $w={24}><Icon w={13} h={13}><path d="M1 6V1h11v11H6.500L1 6.500h5.500V12" strokeWidth="1.400" /></Icon></IconBtn>
              <IconBtn $w={22}><Icon w={13} h={15}><path d="M0 3h13M4 3V1h5v2M1.500 3.500v11h10v-11M4.500 5.500V13M6.500 5.500V13M8.500 5.500V13" strokeWidth="1.200" /></Icon></IconBtn>
            </PanelFoot>
          </Panel>
        </Panels>
      </Main>

      <Taskbar>
        <Task $w={44} aria-label="开始"><Icon w={20} h={20}><path d="M0 2.800l8.500-1.300v8H0zM9.500 1.300L20 0v9.500H9.500zM0 10.500h8.500v8L0 17.200zM9.500 10.500H20V20L9.500 18.700z" {...F} /></Icon></Task>
        <Task aria-label="搜索"><Icon w={20} h={20}><circle cx="12.500" cy="7.500" r="6.500" /><path d="M8 12.500L0 20" /></Icon></Task>
        <Task $w={44} aria-label="Cortana"><Icon w={20} h={20}><circle cx="10" cy="10" r="8.300" strokeWidth="2.500" /></Icon></Task>
        <Task aria-label="任务视图"><Icon w={20} h={20}><path d="M1 0v3.500h12V0M1 20v-3.500h12V20M1 6.500h12v7H1zM18 0v4M18 11v9" strokeWidth="1.300" /><path d="M16.500 6h3v3h-3z" {...F} /></Icon></Task>
        <Task $w={51} $run aria-label="浏览器">
          <Icon w={20} h={20}>
            {['#d640f0', '#f04a4a', '#f0b020', '#f2e63a', '#45cf3a', '#36a0f0'].map((f, i) => <path key={f} d="M10 10C6.500 7 6.500 2.500 10 0c4 0 7.500 2 8.700 5C14 4 11.500 6 10 10z" fill={f} stroke="none" transform={`rotate(${i * 60} 10 10)`} />)}
            <circle cx="10" cy="10" r="2.500" fill="#fff" stroke="none" />
          </Icon>
        </Task>
        <Task $w={44} aria-label="After Effects"><Logo $c="#9a6fd8" $bg="#1e0a3a" $s={18}>Ae</Logo></Task>
        <Task $on aria-label="Photoshop"><Logo $c="#00a8d8" $bg="#001d26" $s={18}>Ps</Logo></Task>
        <Task aria-label="Illustrator"><Logo $c="#d87400" $bg="#2a1400" $s={18}>Ai</Logo></Task>
        <Task $run aria-label="文件资源管理器"><Icon w={20} h={18}><path d="M1 1h8l2 2.500h8V16H1z" fill="#e8a917" stroke="none" /><path d="M1 4.500h18V16H1z" fill="#ffd767" stroke="none" /><path d="M4 17v-7h12v7h-3.500v-3.500h-5V17z" fill="#3a9be0" stroke="none" /></Icon></Task>
        <Task $run><Heart /></Task>
        <Task $run><Heart house /></Task>
        <Tray>
          <Task $w={30}><Icon w={16} h={10}><path d="M1 9l7-7 7 7" /></Icon></Task>
          <Task $w={30}><Icon w={20} h={20}><path d="M10 0c3 2 6 2.500 9 2.500 0 8-2 13-9 16.500C3 15.500 1 10.500 1 2.500 4 2.500 7 2 10 0z" {...F} /><path d="M10 0v19M1 8.500h18" stroke="#1b2a30" strokeWidth="1.200" /><circle cx="15" cy="14.500" r="5.300" fill="#169a4a" stroke="none" /><path d="M12.500 14.500l2 2 3-3.500" /></Icon></Task>
          <Task $w={30}><Icon w={20} h={16}><path d="M1.500 1v3M5 1v3M0 4h6.500v2c0 3-6.500 3-6.500 0zM3.300 8v5H6" strokeWidth="1.200" /><path d="M7 4.500h11v9H5V9" strokeWidth="1.200" /><path d="M7 6.500h9.500V12H7zM18.500 7H20v4h-1.500z" {...F} /></Icon></Task>
          <Task $w={30}><Icon w={20} h={18}><path d="M6 3h13.500v10H3V8M11 13v3M6.500 16.500h9" strokeWidth="1.200" /><path d="M.7 1h4v5h-4zM2.700 6v4" strokeWidth="1.200" /></Icon></Task>
          <Task $w={32}><Icon w={21} h={18}><path d="M1 6h3.500L9 2v14l-4.500-4H1zM11.500 6.500c1.200 1.500 1.200 3.500 0 5M14.500 4c2.500 3 2.500 7 0 10M17.500 1.500c3.500 4.500 3.500 10.500 0 15" strokeWidth="1.200" /></Icon></Task>
          <Task $w={38}><Icon w={20} h={20}><path d="M14.500 1l3 2.500L9 16l-3.500 2 .5-4zM7 9c-5-1-8 5-5.500 9 2 2 5 1 7-1M9 10c4-2 9-4 11-1-1 3-5 1-8 4" strokeWidth="1.200" /></Icon></Task>
          <Task $w={46}><SogouS s={20} /></Task>
          <Clock>23:17</Clock>
          <Icon w={20} h={20}><path d="M1 1h18v14.500h-6.500L10 18.500l-2.500-3H1z" strokeWidth="1.300" /></Icon>
          <Cell $w={12} />
        </Tray>
      </Taskbar>

      <TopWidget><WhiteStub /><Meter /></TopWidget>

      <Annotations width="1920" height="1080" viewBox="0 0 1920 1080" fill="none" stroke={c.red} strokeWidth="4">
        <rect x="518" y="33" width="190" height="400" rx="3" />
        <rect x="1599" y="666" width="219" height="58" rx="3" />
        <path d="M720 322l18-8-2 5.500 574 118.500v1L735 328l1 5z" fill={c.red} stroke="none" />
      </Annotations>

      <Ime>
        <SogouS s={36} />
        <ImeBar>
          <span>五</span>
          <Icon w={18} h={18}><path d="M12 0c2 7-3 12-12 12 4 7 15 7 17-1 1-5-1-9-5-11z" {...F} /></Icon>
          <Icon w={17} h={16}><circle cx="4" cy="4" r="2.300" strokeWidth="1.600" /><path d="M12 8c4-1 5 4 0 8 .5-2 1-2.500.5-3.500-2-1-2-4-.5-4.500z" {...F} /></Icon>
          <Icon w={21} h={16}><rect x="1" y="1" width="19" height="14" rx="1" strokeWidth="2" /><path d="M4 5h13M4 8h13" strokeWidth="2" strokeDasharray="2 1.300" /><path d="M6 12h9" strokeWidth="2" /></Icon>
          <Icon w={16} h={18}><g fill="#b8cccb" stroke="none"><circle cx="8" cy="4" r="4" /><path d="M4 8.500h8c3 1 4 3.500 4 6h-3V18H3v-3.500H0c0-2.500 1-5 4-6z" /></g></Icon>
          <Icon w={18} h={18}><path d="M2.500 15.500L11 7" strokeWidth="4" strokeLinecap="round" /><path d="M17.500 5A5 5 0 1113 .5L11 4l3 3z" {...F} /></Icon>
        </ImeBar>
      </Ime>

      <Watermark>
        <MarkTop>
          <MarkLatin>Bai</MarkLatin>
          <Icon w={100} h={112}>
            <g {...F}>
              <ellipse cx="13" cy="43" rx="13" ry="16" /><ellipse cx="37" cy="19" rx="12" ry="17" /><ellipse cx="68" cy="21" rx="12.500" ry="17" transform="rotate(10 68 21)" /><ellipse cx="87" cy="50" rx="13" ry="16" />
              <path d="M50 46c14 0 17 13 28 23 8 7 14 13 14 23 0 12-9 18-20 18-9 0-14-2-22-2s-12 1-22 1c-13 0-21-6-21-18 0-10 8-16 15-23 10-10 14-22 28-22z" />
            </g>
            <path d="M46 63v33H35c-14 0-14-22 0-22h8M57 74v15c0 5 2 7 6 7h10V74" stroke="#4f4f4f" strokeWidth="7" />
          </Icon>
          <MarkCjk>经验</MarkCjk>
        </MarkTop>
        <MarkUrl>jingyan.baidu.com</MarkUrl>
      </Watermark>
    </Shell>
  );
}
